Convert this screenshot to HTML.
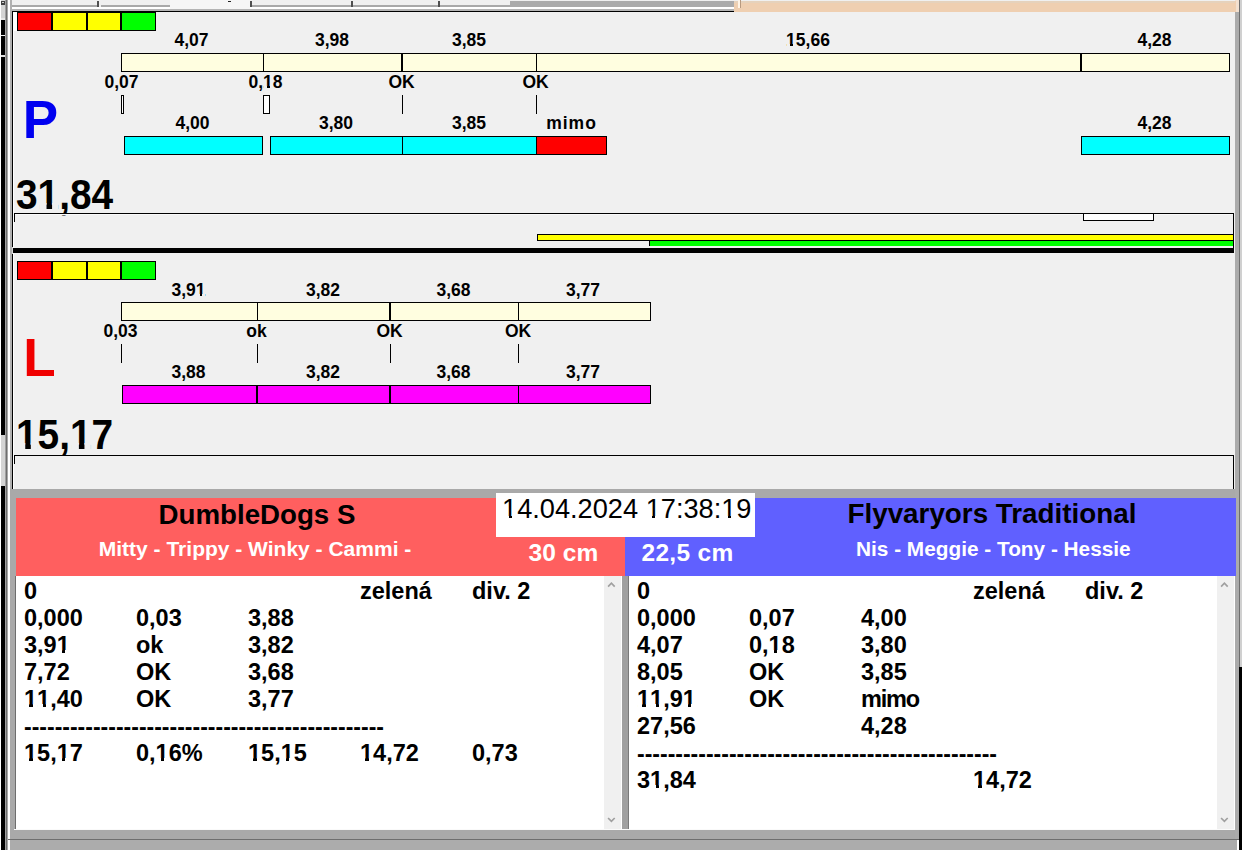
<!DOCTYPE html>
<html><head><meta charset="utf-8"><style>
html,body{margin:0;padding:0;width:1242px;height:850px;overflow:hidden;background:#f0f0f0;}
body>div,body>svg{position:absolute;}
.t{font-family:"Liberation Sans", sans-serif;font-weight:bold;white-space:pre;}
.o,.r{position:relative;display:inline-block;}
.o::before,.o::after,.r::before,.r::after{content:'';position:absolute;background:var(--bg);}
.o::before{left:0.03em;width:0.2025em;top:0.69em;height:0.18em;}
.o::after{left:0.37em;width:0.18em;top:0.69em;height:0.18em;}
.r::before{left:0.04em;width:0.2em;top:0.755em;height:0.115em;}
.r::after{left:0.35em;width:0.21em;top:0.755em;height:0.115em;}
</style></head><body>
<div style="left:0px;top:0px;width:1px;height:850px;background:#ffffff;"></div>
<div style="left:1px;top:0px;width:4px;height:850px;background:#000000;"></div>
<div style="left:1px;top:0px;width:4px;height:18px;background:#d4d4d4;"></div>
<div style="left:1px;top:1px;width:4px;height:4px;background:#404040;"></div>
<div style="left:2px;top:2px;width:2px;height:1px;background:#d0d0d0;"></div>
<div style="left:1px;top:18px;width:4px;height:2px;background:#e8e8e8;"></div>
<div style="left:1px;top:35px;width:4px;height:1px;background:#f0f0f0;"></div>
<div style="left:1px;top:55px;width:4px;height:2px;background:#e0e0e0;"></div>
<div style="left:1px;top:435px;width:4px;height:51px;background:#d4d4d4;"></div>
<div style="left:5px;top:0px;width:1px;height:850px;background:#a0a0a0;"></div>
<div style="left:6px;top:0px;width:1px;height:850px;background:#6e6e6e;"></div>
<div style="left:7px;top:0px;width:1px;height:850px;background:#a8a8a8;"></div>
<div style="left:8px;top:0px;width:2px;height:850px;background:#ffffff;"></div>
<div style="left:10px;top:0px;width:2px;height:850px;background:#b0b0b0;"></div>
<div style="left:12px;top:0px;width:1224px;height:11px;background:#f0f0f0;"></div>
<div style="left:12px;top:5px;width:86px;height:2px;background:#a9a9a9;"></div>
<div style="left:101px;top:5px;width:69px;height:2px;background:#a9a9a9;"></div>
<div style="left:251px;top:5px;width:100px;height:2px;background:#a9a9a9;"></div>
<div style="left:352px;top:5px;width:86px;height:2px;background:#a9a9a9;"></div>
<div style="left:439px;top:5px;width:71px;height:2px;background:#a9a9a9;"></div>
<div style="left:97px;top:1px;width:2px;height:6px;background:#505050;"></div>
<div style="left:250px;top:1px;width:2px;height:6px;background:#505050;"></div>
<div style="left:351px;top:1px;width:2px;height:6px;background:#505050;"></div>
<div style="left:438px;top:1px;width:2px;height:6px;background:#505050;"></div>
<div style="left:12px;top:7px;width:722px;height:2px;background:#ffffff;"></div>
<div style="left:12px;top:9px;width:722px;height:2px;background:#b4b4b4;"></div>
<div style="left:510px;top:1px;width:224px;height:6px;background:#ababab;"></div>
<div style="left:170px;top:0px;width:80px;height:9px;background:#f6f6f6;"></div>
<div style="left:228px;top:1px;width:3px;height:1px;background:#202020;"></div>
<div style="left:734px;top:1px;width:502px;height:11px;background:#efcfb1;"></div>
<div style="left:734px;top:1px;width:502px;height:2px;background:#e6d2bc;"></div>
<div style="left:738px;top:0px;width:2px;height:8px;background:#fff4e6;"></div>
<div style="left:740px;top:0px;width:1px;height:8px;background:#b89a80;"></div>
<div style="left:12px;top:11px;width:1px;height:478px;background:#000000;"></div>
<div style="left:13px;top:11px;width:1px;height:478px;background:#ffffff;"></div>
<div style="left:14px;top:12px;width:1221px;height:236px;background:#f0f0f0;"></div>
<div style="left:12px;top:11px;width:722px;height:1px;background:#000000;"></div>
<div style="left:17px;top:12px;width:35px;height:19px;background:#ff0000;border:1px solid #000;box-sizing:border-box;"></div>
<div style="left:52px;top:12px;width:35px;height:19px;background:#ffff00;border:1px solid #000;box-sizing:border-box;"></div>
<div style="left:87px;top:12px;width:34px;height:19px;background:#ffff00;border:1px solid #000;box-sizing:border-box;"></div>
<div style="left:121px;top:12px;width:35px;height:19px;background:#00ff00;border:1px solid #000;box-sizing:border-box;"></div>
<div style="left:13px;top:12px;width:4px;height:19px;background:#ffffff;"></div>
<div style="left:121px;top:53px;width:1109px;height:19px;background:#fffee0;border:1px solid #000;box-sizing:border-box;"></div>
<div style="left:263px;top:53px;width:1px;height:19px;background:#000;"></div>
<div style="left:401px;top:53px;width:2px;height:19px;background:#000;"></div>
<div style="left:536px;top:53px;width:1px;height:19px;background:#000;"></div>
<div style="left:1080px;top:53px;width:2px;height:19px;background:#000;"></div>
<div class="t" style="top:32.19px;font-size:17.5px;line-height:17.5px;color:#000;left:131.50px;width:120px;text-align:center;">4,07</div>
<div class="t" style="top:32.19px;font-size:17.5px;line-height:17.5px;color:#000;left:272.00px;width:120px;text-align:center;">3,98</div>
<div class="t" style="top:32.19px;font-size:17.5px;line-height:17.5px;color:#000;left:409.00px;width:120px;text-align:center;">3,85</div>
<div class="t" style="top:32.19px;font-size:17.5px;line-height:17.5px;color:#000;left:748.00px;width:120px;text-align:center;--bg:#f0f0f0;"><span class="o">1</span>5,66</div>
<div class="t" style="top:32.19px;font-size:17.5px;line-height:17.5px;color:#000;left:1094.50px;width:120px;text-align:center;">4,28</div>
<div class="t" style="top:73.69px;font-size:17.5px;line-height:17.5px;color:#000;left:61.50px;width:120px;text-align:center;">0,07</div>
<div class="t" style="top:73.69px;font-size:17.5px;line-height:17.5px;color:#000;left:205.50px;width:120px;text-align:center;--bg:#f0f0f0;">0,<span class="o">1</span>8</div>
<div class="t" style="top:73.69px;font-size:17.5px;line-height:17.5px;color:#000;left:341.50px;width:120px;text-align:center;">OK</div>
<div class="t" style="top:73.69px;font-size:17.5px;line-height:17.5px;color:#000;left:475.50px;width:120px;text-align:center;">OK</div>
<div style="left:121px;top:95px;width:3px;height:19px;background:#fff;border:1px solid #000;box-sizing:border-box;"></div>
<div style="left:263px;top:95px;width:7px;height:19px;background:#fff;border:1px solid #000;box-sizing:border-box;"></div>
<div style="left:402px;top:95px;width:1px;height:19px;background:#000;"></div>
<div style="left:536px;top:95px;width:1px;height:19px;background:#000;"></div>
<div style="left:124px;top:136px;width:139px;height:19px;background:#00ffff;border:1px solid #000;box-sizing:border-box;"></div>
<div style="left:270px;top:136px;width:267px;height:19px;background:#00ffff;border:1px solid #000;box-sizing:border-box;"></div>
<div style="left:402px;top:136px;width:1px;height:19px;background:#000;"></div>
<div style="left:536px;top:136px;width:71px;height:19px;background:#ff0000;border:1px solid #000;box-sizing:border-box;"></div>
<div style="left:1081px;top:136px;width:149px;height:19px;background:#00ffff;border:1px solid #000;box-sizing:border-box;"></div>
<div class="t" style="top:115.19px;font-size:17.5px;line-height:17.5px;color:#000;left:132.50px;width:120px;text-align:center;">4,00</div>
<div class="t" style="top:115.19px;font-size:17.5px;line-height:17.5px;color:#000;left:276.00px;width:120px;text-align:center;">3,80</div>
<div class="t" style="top:115.19px;font-size:17.5px;line-height:17.5px;color:#000;left:409.00px;width:120px;text-align:center;">3,85</div>
<div class="t" style="top:115.19px;font-size:17.5px;line-height:17.5px;color:#000;left:1094.50px;width:120px;text-align:center;">4,28</div>
<div class="t" style="top:115.19px;font-size:17.5px;line-height:17.5px;color:#000;letter-spacing:1.0px;left:511.50px;width:120px;text-align:center;">mimo</div>
<div class="t" style="top:93.14px;font-size:53px;line-height:53px;color:#0000f0;left:22.70px;">P</div>
<div class="t" style="top:174.45px;font-size:42px;line-height:42px;color:#000;transform:scaleX(0.925);transform-origin:0 0;left:15.50px;--bg:#f0f0f0;">3<span class="o">1</span>,84</div>
<div style="left:14px;top:213px;width:1220px;height:1px;background:#000;"></div>
<div style="left:14px;top:214px;width:1219px;height:1px;background:#fafafa;"></div>
<div style="left:1233px;top:213px;width:1px;height:35px;background:#000;"></div>
<div style="left:14px;top:214px;width:1px;height:8px;background:#000;"></div>
<div style="left:1083px;top:213px;width:71px;height:8px;background:#fff;border:1px solid #000;box-sizing:border-box;"></div>
<div style="left:537px;top:234px;width:697px;height:7px;background:#ffff00;border:1px solid #000;box-sizing:border-box;"></div>
<div style="left:649px;top:240px;width:585px;height:6px;background:#00ff00;border:1px solid #000;box-sizing:border-box;border-bottom:none;"></div>
<div style="left:13px;top:248px;width:1221px;height:5px;background:#000;"></div>
<div style="left:12px;top:247px;width:1px;height:7px;background:#d8d8d8;"></div>
<div style="left:14px;top:253px;width:1221px;height:236px;background:#f0f0f0;"></div>
<div style="left:17px;top:261px;width:35px;height:19px;background:#ff0000;border:1px solid #000;box-sizing:border-box;"></div>
<div style="left:52px;top:261px;width:35px;height:19px;background:#ffff00;border:1px solid #000;box-sizing:border-box;"></div>
<div style="left:87px;top:261px;width:34px;height:19px;background:#ffff00;border:1px solid #000;box-sizing:border-box;"></div>
<div style="left:121px;top:261px;width:35px;height:19px;background:#00ff00;border:1px solid #000;box-sizing:border-box;"></div>
<div style="left:121px;top:302px;width:530px;height:19px;background:#fffee0;border:1px solid #000;box-sizing:border-box;"></div>
<div style="left:257px;top:302px;width:1px;height:19px;background:#000;"></div>
<div style="left:389px;top:302px;width:2px;height:19px;background:#000;"></div>
<div style="left:518px;top:302px;width:1px;height:19px;background:#000;"></div>
<div class="t" style="top:281.69px;font-size:17.5px;line-height:17.5px;color:#000;left:128.50px;width:120px;text-align:center;--bg:#f0f0f0;">3,9<span class="o">1</span></div>
<div class="t" style="top:281.69px;font-size:17.5px;line-height:17.5px;color:#000;left:263.00px;width:120px;text-align:center;">3,82</div>
<div class="t" style="top:281.69px;font-size:17.5px;line-height:17.5px;color:#000;left:393.50px;width:120px;text-align:center;">3,68</div>
<div class="t" style="top:281.69px;font-size:17.5px;line-height:17.5px;color:#000;left:523.00px;width:120px;text-align:center;">3,77</div>
<div class="t" style="top:323.19px;font-size:17.5px;line-height:17.5px;color:#000;left:60.50px;width:120px;text-align:center;">0,03</div>
<div class="t" style="top:323.19px;font-size:17.5px;line-height:17.5px;color:#000;left:196.50px;width:120px;text-align:center;">ok</div>
<div class="t" style="top:323.19px;font-size:17.5px;line-height:17.5px;color:#000;left:329.50px;width:120px;text-align:center;">OK</div>
<div class="t" style="top:323.19px;font-size:17.5px;line-height:17.5px;color:#000;left:458.00px;width:120px;text-align:center;">OK</div>
<div style="left:121px;top:344px;width:1px;height:19px;background:#000;"></div>
<div style="left:257px;top:344px;width:1px;height:19px;background:#000;"></div>
<div style="left:390px;top:344px;width:1px;height:19px;background:#000;"></div>
<div style="left:518px;top:344px;width:1px;height:19px;background:#000;"></div>
<div style="left:122px;top:385px;width:529px;height:19px;background:#ff00ff;border:1px solid #000;box-sizing:border-box;"></div>
<div style="left:256px;top:385px;width:2px;height:19px;background:#000;"></div>
<div style="left:389px;top:385px;width:2px;height:19px;background:#000;"></div>
<div style="left:518px;top:385px;width:1px;height:19px;background:#000;"></div>
<div class="t" style="top:364.19px;font-size:17.5px;line-height:17.5px;color:#000;left:128.50px;width:120px;text-align:center;">3,88</div>
<div class="t" style="top:364.19px;font-size:17.5px;line-height:17.5px;color:#000;left:263.00px;width:120px;text-align:center;">3,82</div>
<div class="t" style="top:364.19px;font-size:17.5px;line-height:17.5px;color:#000;left:393.50px;width:120px;text-align:center;">3,68</div>
<div class="t" style="top:364.19px;font-size:17.5px;line-height:17.5px;color:#000;left:523.00px;width:120px;text-align:center;">3,77</div>
<div class="t" style="top:331.14px;font-size:53px;line-height:53px;color:#f00000;left:23.30px;">L</div>
<div class="t" style="top:414.45px;font-size:42px;line-height:42px;color:#000;transform:scaleX(0.925);transform-origin:0 0;left:16.00px;--bg:#f0f0f0;"><span class="o">1</span>5,<span class="o">1</span>7</div>
<div style="left:14px;top:455px;width:1220px;height:1px;background:#000;"></div>
<div style="left:1233px;top:455px;width:1px;height:34px;background:#000;"></div>
<div style="left:14px;top:456px;width:1px;height:8px;background:#000;"></div>
<div style="left:1235px;top:0px;width:4px;height:850px;background:#ababab;"></div>
<div style="left:1239px;top:0px;width:1px;height:850px;background:#6e6e6e;"></div>
<div style="left:1240px;top:0px;width:2px;height:850px;background:#d0d0d0;"></div>
<div style="left:1239px;top:667px;width:3px;height:183px;background:#000;"></div>
<div style="left:1235px;top:0px;width:4px;height:12px;background:#f2e0d0;"></div>
<div style="left:1235px;top:1px;width:1px;height:11px;background:#efcfb1;"></div>
<div style="left:10px;top:489px;width:1225px;height:350px;background:#a9a9a9;"></div>
<div style="left:16px;top:498px;width:609px;height:78px;background:#ff5f5f;"></div>
<div style="left:625px;top:498px;width:611px;height:78px;background:#6060ff;"></div>
<div style="left:15px;top:576px;width:607px;height:254px;background:#ffffff;border-left:1px solid #6e6e6e;box-sizing:border-box;"></div>
<div style="left:604px;top:576px;width:17px;height:253px;background:#f0f0f0;"></div>
<div style="left:622px;top:576px;width:6px;height:254px;background:#a0a0a0;"></div>
<div style="left:628px;top:576px;width:1px;height:254px;background:#7a7a7a;"></div>
<div style="left:629px;top:576px;width:606px;height:254px;background:#ffffff;"></div>
<div style="left:1217px;top:576px;width:17px;height:253px;background:#f0f0f0;"></div>
<div style="left:14px;top:829px;width:1221px;height:1px;background:#fafafa;"></div>
<div style="left:8px;top:839px;width:1231px;height:1px;background:#6e6e6e;"></div>
<div style="left:10px;top:840px;width:1229px;height:10px;background:#acacac;"></div>
<div style="left:1237px;top:840px;width:2px;height:10px;background:#ffffff;"></div>
<svg style="left:0;top:0;width:1242px;height:850px" width="1242" height="850"><path d="M608.1,586.5999999999999 L611.4,583.1999999999999 L614.6999999999999,586.5999999999999" fill="none" stroke="#a0a0a0" stroke-width="1.7"/></svg>
<svg style="left:0;top:0;width:1242px;height:850px" width="1242" height="850"><path d="M608.1,818.0 L611.4,821.4 L614.6999999999999,818.0" fill="none" stroke="#a0a0a0" stroke-width="1.7"/></svg>
<svg style="left:0;top:0;width:1242px;height:850px" width="1242" height="850"><path d="M1221.1000000000001,586.5999999999999 L1224.4,583.1999999999999 L1227.7,586.5999999999999" fill="none" stroke="#a0a0a0" stroke-width="1.7"/></svg>
<svg style="left:0;top:0;width:1242px;height:850px" width="1242" height="850"><path d="M1221.1000000000001,818.0 L1224.4,821.4 L1227.7,818.0" fill="none" stroke="#a0a0a0" stroke-width="1.7"/></svg>
<div style="left:496px;top:493px;width:259px;height:44px;background:#ffffff;"></div>
<div class="t" style="top:495.48px;font-size:27.2px;line-height:27.2px;color:#000;font-weight:normal;left:502.00px;--bg:#fff;"><span class="r">1</span>4.04.2024 <span class="r">1</span>7:38:<span class="r">1</span>9</div>
<div class="t" style="top:500.55px;font-size:27.7px;line-height:27.7px;color:#000;left:158.50px;">DumbleDogs S</div>
<div class="t" style="top:538.22px;font-size:21px;line-height:21px;color:#ffffff;left:98.80px;">Mitty - Trippy - Winky - Cammi -</div>
<div class="t" style="top:540.76px;font-size:24.5px;line-height:24.5px;color:#ffffff;letter-spacing:0.1px;left:528.50px;">30 cm</div>
<div class="t" style="top:540.76px;font-size:24.5px;line-height:24.5px;color:#ffffff;letter-spacing:0.3px;left:641.50px;">22,5 cm</div>
<div class="t" style="top:499.97px;font-size:27.8px;line-height:27.8px;color:#000;left:847.50px;">Flyvaryors Traditional</div>
<div class="t" style="top:538.69px;font-size:20.8px;line-height:20.8px;color:#ffffff;left:856.00px;">Nis - Meggie - Tony - Hessie</div>
<div class="t" style="top:580.11px;font-size:23.5px;line-height:23.5px;color:#000;left:24.00px;">0</div>
<div class="t" style="top:580.11px;font-size:23.5px;line-height:23.5px;color:#000;left:360.00px;">zelená</div>
<div class="t" style="top:580.11px;font-size:23.5px;line-height:23.5px;color:#000;left:472.00px;">div. 2</div>
<div class="t" style="top:607.11px;font-size:23.5px;line-height:23.5px;color:#000;left:24.00px;">0,000</div>
<div class="t" style="top:607.11px;font-size:23.5px;line-height:23.5px;color:#000;left:136.00px;">0,03</div>
<div class="t" style="top:607.11px;font-size:23.5px;line-height:23.5px;color:#000;left:248.00px;">3,88</div>
<div class="t" style="top:634.11px;font-size:23.5px;line-height:23.5px;color:#000;left:24.00px;--bg:#fff;">3,9<span class="o">1</span></div>
<div class="t" style="top:634.11px;font-size:23.5px;line-height:23.5px;color:#000;left:136.00px;">ok</div>
<div class="t" style="top:634.11px;font-size:23.5px;line-height:23.5px;color:#000;left:248.00px;">3,82</div>
<div class="t" style="top:661.11px;font-size:23.5px;line-height:23.5px;color:#000;left:24.00px;">7,72</div>
<div class="t" style="top:661.11px;font-size:23.5px;line-height:23.5px;color:#000;left:136.00px;">OK</div>
<div class="t" style="top:661.11px;font-size:23.5px;line-height:23.5px;color:#000;left:248.00px;">3,68</div>
<div class="t" style="top:688.11px;font-size:23.5px;line-height:23.5px;color:#000;left:24.00px;--bg:#fff;"><span class="o">1</span><span class="o">1</span>,40</div>
<div class="t" style="top:688.11px;font-size:23.5px;line-height:23.5px;color:#000;left:136.00px;">OK</div>
<div class="t" style="top:688.11px;font-size:23.5px;line-height:23.5px;color:#000;left:248.00px;">3,77</div>
<div class="t" style="top:716.03px;font-size:23px;line-height:23px;color:#000;left:24.00px;">-----------------------------------------------</div>
<div class="t" style="top:742.11px;font-size:23.5px;line-height:23.5px;color:#000;left:24.00px;--bg:#fff;"><span class="o">1</span>5,<span class="o">1</span>7</div>
<div class="t" style="top:742.11px;font-size:23.5px;line-height:23.5px;color:#000;left:136.00px;--bg:#fff;">0,<span class="o">1</span>6%</div>
<div class="t" style="top:742.11px;font-size:23.5px;line-height:23.5px;color:#000;left:248.00px;--bg:#fff;"><span class="o">1</span>5,<span class="o">1</span>5</div>
<div class="t" style="top:742.11px;font-size:23.5px;line-height:23.5px;color:#000;left:360.00px;--bg:#fff;"><span class="o">1</span>4,72</div>
<div class="t" style="top:742.11px;font-size:23.5px;line-height:23.5px;color:#000;left:472.00px;">0,73</div>
<div class="t" style="top:580.11px;font-size:23.5px;line-height:23.5px;color:#000;left:637.00px;">0</div>
<div class="t" style="top:580.11px;font-size:23.5px;line-height:23.5px;color:#000;left:973.00px;">zelená</div>
<div class="t" style="top:580.11px;font-size:23.5px;line-height:23.5px;color:#000;left:1085.00px;">div. 2</div>
<div class="t" style="top:607.11px;font-size:23.5px;line-height:23.5px;color:#000;left:637.00px;">0,000</div>
<div class="t" style="top:607.11px;font-size:23.5px;line-height:23.5px;color:#000;left:749.00px;">0,07</div>
<div class="t" style="top:607.11px;font-size:23.5px;line-height:23.5px;color:#000;left:861.00px;">4,00</div>
<div class="t" style="top:634.11px;font-size:23.5px;line-height:23.5px;color:#000;left:637.00px;">4,07</div>
<div class="t" style="top:634.11px;font-size:23.5px;line-height:23.5px;color:#000;left:749.00px;--bg:#fff;">0,<span class="o">1</span>8</div>
<div class="t" style="top:634.11px;font-size:23.5px;line-height:23.5px;color:#000;left:861.00px;">3,80</div>
<div class="t" style="top:661.11px;font-size:23.5px;line-height:23.5px;color:#000;left:637.00px;">8,05</div>
<div class="t" style="top:661.11px;font-size:23.5px;line-height:23.5px;color:#000;left:749.00px;">OK</div>
<div class="t" style="top:661.11px;font-size:23.5px;line-height:23.5px;color:#000;left:861.00px;">3,85</div>
<div class="t" style="top:688.11px;font-size:23.5px;line-height:23.5px;color:#000;left:637.00px;--bg:#fff;"><span class="o">1</span><span class="o">1</span>,9<span class="o">1</span></div>
<div class="t" style="top:688.11px;font-size:23.5px;line-height:23.5px;color:#000;left:749.00px;">OK</div>
<div class="t" style="top:688.11px;font-size:23.5px;line-height:23.5px;color:#000;letter-spacing:-1.2px;left:861.00px;">mimo</div>
<div class="t" style="top:715.11px;font-size:23.5px;line-height:23.5px;color:#000;left:637.00px;">27,56</div>
<div class="t" style="top:715.11px;font-size:23.5px;line-height:23.5px;color:#000;left:861.00px;">4,28</div>
<div class="t" style="top:743.03px;font-size:23px;line-height:23px;color:#000;left:637.00px;">-----------------------------------------------</div>
<div class="t" style="top:769.11px;font-size:23.5px;line-height:23.5px;color:#000;left:637.00px;--bg:#fff;">3<span class="o">1</span>,84</div>
<div class="t" style="top:769.11px;font-size:23.5px;line-height:23.5px;color:#000;left:973.00px;--bg:#fff;"><span class="o">1</span>4,72</div>
</body></html>
